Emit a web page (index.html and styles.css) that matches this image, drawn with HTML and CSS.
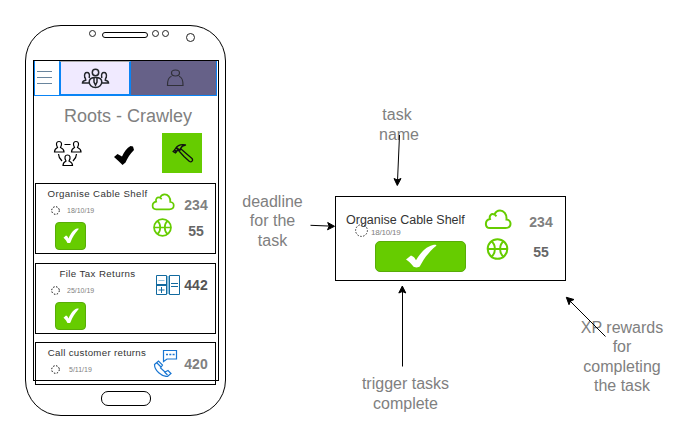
FILE: index.html
```html
<!DOCTYPE html>
<html lang="en">
<head>
<meta charset="utf-8">
<title>Roots - Crawley</title>
<link rel="stylesheet" href="styles.css">
</head>
<body>
<svg class="defs" width="0" height="0">
  <symbol id="cloud" viewBox="0 0 27 21"><path d="M5.500 19H21c6.500 0 6.500-8 1-8.500C22.500 5 19 1.500 15.500 1.500c-3 0-4.500 1.500-5.500 4C6.500 4 4.500 7 5.500 10 0 11 0 19 5.500 19ZM10 5.500l2 1.700" fill="none" stroke="#6c0" stroke-width="2"/></symbol>
  <symbol id="ball" viewBox="0 0 22 22"><path d="M1 11h20M5 3.500c4.500 3 4.500 12 0 15M17 3.500c-4.500 3-4.500 12 0 15" fill="none" stroke="#6c0" stroke-width="2"/><circle cx="11" cy="11" r="9.800" fill="none" stroke="#6c0" stroke-width="2"/></symbol>
  <symbol id="tick" viewBox="0 0 32 26" preserveAspectRatio="none"><path d="M1 16l5-4c3 1 4 3 5 5C15 10 20 3 28 1c3-.5 4 0 3 1C24 8 19 15 15 23c-1 2-6 2-7 0-2-3-4-5-7-7Z" fill="currentColor"/></symbol>
</svg>
<main class="canvas">
  <section class="phone">
    <svg class="speaker" width="199" height="34" viewBox="26 26 199 34" fill="none" stroke="#222">
      <circle cx="92.500" cy="33.500" r="3"/><rect x="102.500" y="32.500" width="45" height="5" rx="2.500" stroke="#000"/>
      <circle cx="155.500" cy="33.500" r="3"/><circle cx="165.500" cy="33.500" r="3"/><circle cx="190.500" cy="37.500" r="4"/>
    </svg>
    <div class="screen">
      <nav class="tabs">
        <div class="tab menu"><svg width="16" height="16" viewBox="0 0 16 16" stroke="#69859d"><path d="M0 1.500h15M0 7.500h15M0 13.500h15"/></svg></div>
        <div class="tab group">
          <svg width="30" height="22" viewBox="80 66 30 22" fill="none" stroke="#23262b" stroke-width="1.500">
            <circle cx="95.500" cy="71.500" r="3.200"/>
            <path d="M84.800 77c-1-4.500.7-5.500 2.200-5.500s3.200 1 2.200 5.500M101.800 77c-1-4.500.7-5.500 2.200-5.500s3.200 1 2.200 5.500M85 76.500c.5 1 .8 2 .7 2.800-2 .5-3.200.8-3.200 2.700h6.500M106 76.500c-.5 1-.8 2-.7 2.800 2 .5 3.200.8 3.200 2.700H102M95.500 76.500c-4 0-6.300 2-6.300 4.500s2.300 5.500 6.300 5.500 6.300-3 6.300-5.500-2.300-4.500-6.300-4.500Z"/>
            <path d="M94 77v4l1.500 3 1.500-3v-4"/>
          </svg>
        </div>
        <div class="tab user">
          <svg width="18" height="18" viewBox="166 69 18 18" fill="none" stroke="#303039" stroke-width="1.200"><ellipse cx="175.500" cy="73" rx="4" ry="3"/><path d="M171.500 76.300c-3 1-4 3-4 9.200h15.500c0-6.200-1-8.200-4-9.200"/></svg>
        </div>
      </nav>
      <h1 class="heading">Roots - Crawley</h1>
      <div class="actions">
        <svg class="action-people" width="30" height="28" viewBox="53 140 30 28" fill="none" stroke="#000" stroke-width="1.200">
          <path d="M57.500 147.500c-2-3.500-1-6 1.500-6s3.500 2.500 1.500 6c2 1 3.500 1.500 3.500 4.500h-9.500c0-3 1-3.500 3-4.500ZM74.500 147.500c-2-3.500-1-6 1.500-6s3.500 2.500 1.500 6c2 1 3.500 1.500 3.500 4.500h-9.500c0-3 1-3.500 3-4.500ZM66 161c-2-3.500-1-6 1.500-6s3.500 2.500 1.500 6c2 1 3.500 1.500 3.500 4.500H63c0-3 1-3.500 3-4.500ZM64.500 144.500h6M58.500 154c0 3 1.500 5 3.500 7M76.500 154c0 3-1.500 5-3.500 7"/>
        </svg>
        <svg class="action-done" width="20" height="20" viewBox="0 0 20 20"><path d="M0 11l3.500-3 4.500 2.500C10 6 13 2 16.500 0L19 .5l1 3.500c-4 4-6.500 8-8.500 12.500L8.500 19C6 16 3 14 0 11Z"/></svg>
        <div class="action-tool">
          <svg width="22" height="20" viewBox="171 143 22 20" fill="none" stroke="#111" stroke-width="1.300" stroke-linejoin="round"><path d="M172.500 151.500l2-3c2-3 5-4.500 10-3.500-2 .5-4 1.500-4.500 3l-1.500 2-2.500.5-1.500 2.500-2.500-1.500Z"/><path d="M178 151l2-2 11 9.500c1.500 2-.5 4-2.500 3L183 156.500Z"/><path d="M173 150l3 2M175 147.500l3 2.500" stroke-width="2"/></svg>
        </div>
      </div>
      <div class="cards">
        <article class="card">
          <div class="info">
            <h2 class="title">Organise Cable Shelf</h2>
            <div class="due"><svg width="9" height="9" viewBox="0 0 9 9"><circle cx="4.500" cy="4.500" r="3.800" fill="none" stroke="#000" stroke-dasharray="1.500 1.500"/></svg><span>18/10/19</span></div>
            <button class="done"><svg width="16" height="16"><use href="#tick"/></svg></button>
          </div>
          <div class="icons"><svg width="24" height="18"><use href="#cloud"/></svg><svg width="19" height="19"><use href="#ball"/></svg></div>
          <div class="points"><b>234</b><b class="dark">55</b></div>
        </article>
        <article class="card">
          <div class="info">
            <h2 class="title">File Tax Returns</h2>
            <div class="due"><svg width="9" height="9" viewBox="0 0 9 9"><circle cx="4.500" cy="4.500" r="3.800" fill="none" stroke="#000" stroke-dasharray="1.500 1.500"/></svg><span>25/10/19</span></div>
            <button class="done"><svg width="16" height="16"><use href="#tick"/></svg></button>
          </div>
          <div class="icons calc">
            <svg width="25" height="20" viewBox="156 275 25 20" fill="none" stroke="#126a9f"><path d="M156.500 275.500h10v19h-10ZM169.500 275.500h10v19h-10Z"/><path d="M168 276v18" stroke="#8fc0dc" stroke-width="2"/><path d="M156 285h11" stroke-width="2"/><path d="M171 283.500h7M171 286.500h7M158.500 290h6M161.500 287v6"/><path d="M158.500 280.500h6" stroke="#8fc0dc"/></svg>
          </div>
          <div class="points"><b class="darker">442</b></div>
        </article>
        <article class="card short">
          <div class="info">
            <h2 class="title t3">Call customer returns</h2>
            <div class="due"><svg width="9" height="9" viewBox="0 0 9 9"><circle cx="4.500" cy="4.500" r="3.800" fill="none" stroke="#000" stroke-dasharray="1.500 1.500"/></svg><span class="d3">5/11/19</span></div>
          </div>
          <div class="icons call">
            <svg width="26" height="28" viewBox="153 349 26 28" fill="none" stroke="#1976d2" stroke-width="1.200"><path d="M163.500 350.500h13v8.500H167l-3.500 2.500Z"/><path d="M166 354.500h9" stroke-width="1.500" stroke-dasharray="2 1.300"/><path d="M154.500 364.500l4-3.500 4 4-2 3 4.500 4 3-1.500 3 3-3.500 3c-6 0-13-6-13-12ZM157 363l4 4M164.500 372l3 3"/></svg>
          </div>
          <div class="points"><b>420</b></div>
        </article>
      </div>
    </div>
    <div class="home"></div>
  </section>

  <article class="detail">
    <div class="detail-info">
      <h2 class="detail-title">Organise Cable Shelf</h2>
      <div class="detail-due"><svg width="13" height="13" viewBox="0 0 13 13"><circle cx="6.500" cy="6.500" r="5.900" fill="none" stroke="#000" stroke-dasharray="1.200 1.800"/></svg><span>18/10/19</span></div>
      <button class="detail-done"><svg width="32" height="25"><use href="#tick"/></svg></button>
    </div>
    <div class="detail-icons"><svg width="28" height="21"><use href="#cloud"/></svg><svg width="23" height="22"><use href="#ball"/></svg></div>
    <div class="detail-points"><b>234</b><b class="dark">55</b></div>
  </article>

  <p class="note note-name">task<br><span class="shift">name</span></p>
  <p class="note note-deadline">deadline<br>for the<br>task</p>
  <p class="note note-trigger">trigger tasks<br>complete</p>
  <p class="note note-xp">XP rewards<br>for<br>completing<br>the task</p>
  <svg class="arrows" width="697" height="442" viewBox="0 0 697 442" stroke="#000">
    <path d="M399.500 135l-2 46M310.500 225.300l20 .8M402.500 366.500V290M605.500 336.500L569 300" fill="none"/>
    <path d="M397.300 185.500l-3.300-7 3.500 1.500 3.500-1.500ZM334.500 226.300l-7 3.500 1.700-3.600-1.500-3.700ZM402.300 286l3.500 7-3.500-1.500-3.500 1.500ZM566.300 297.300l7.700 2.200-3.500 1.700-1.500 3.500Z"/>
  </svg>
</main>
</body>
</html>
```
FILE: styles.css
```css
* { box-sizing: border-box; }
body { margin: 0; background: #fff; font-family: "Liberation Sans", Arial, sans-serif; color: #808080; }
svg { display: block; flex: none; }
.defs { position: absolute; }
h1, h2, p { margin: 0; font-weight: normal; }
button { padding: 0; color: #fff; background: #6c0; border: 1px solid #58ac08; display: flex; align-items: center; justify-content: center; }
.canvas { position: relative; width: 697px; height: 442px; overflow: hidden; }

.phone { position: absolute; left: 25px; top: 25px; width: 201px; height: 391px; border: 1px solid #000; border-radius: 36px; }
.screen { width: 186px; height: 321px; margin-left: 7px; border: 1px solid #000; }
.home { width: 50px; height: 15px; margin: 10px 0 0 75px; border: 1px solid #000; border-radius: 7px; }

.tabs { display: flex; height: 35px; margin-right: 1px; }
.tab { display: flex; align-items: center; justify-content: center; border-bottom: 1px solid #0a84f5; }
.menu { width: 25px; border-left: 1px solid #0a84f5; justify-content: flex-start; padding-left: 2px; }
.group { width: 72px; background: #f0eaff; border: 2px solid #0a84f5; border-top: 1px solid #aaa; }
.user { flex: 1; background: #666188; border-right: 1px solid #0a84f5; padding-left: 3px; }

.heading { height: 37px; padding-top: 10px; font-size: 18px; line-height: 21px; text-align: center; padding-left: 4px; white-space: nowrap; }
.actions { display: flex; height: 50px; padding: 0 16px 0 19px; }
.action-people { margin-top: 7px; }
.action-done { margin: 13px 0 0 31px; }
.action-tool { width: 40px; height: 40px; margin: 0 0 0 28px; background: #6c0; display: flex; align-items: center; justify-content: center; padding: 0 0 1px 1px; }

.cards { display: flex; flex-direction: column; gap: 9px; margin-left: 1px; width: 181px; }
.card { display: grid; grid-template-columns: 113px 29px 37px; height: 71px; border: 1px solid #000; }
.short { height: 43px; margin-top: -1px; }
.info { padding: 3px 0 0 10px; }
.title { font-size: 9.7px; line-height: 14px; color: #333; text-align: center; white-space: nowrap; letter-spacing: .4px; }
.t3 { letter-spacing: .3px; padding-right: 1px; }
.due { display: flex; align-items: center; gap: 7px; height: 17px; margin-left: 5px; font-size: 7px; line-height: 9px; padding-top: 1px; }
.d3 { margin-left: 2px; }
.done { width: 31px; height: 28px; margin: 4px 0 0 9px; border-radius: 4px; }
.icons { padding: 9px 0 0 2px; display: flex; flex-direction: column; gap: 7px; }
.icons svg + svg { margin-left: 2px; }
.calc { padding: 11px 0 0 7px; }
.call { padding: 6px 0 0 4px; }
.points { display: flex; flex-direction: column; align-items: center; gap: 10px; padding: 13px 1px 0 0; font-size: 14px; line-height: 16px; }
.dark { color: #666; }
.darker { color: #555; }

.detail { position: absolute; left: 335px; top: 196px; width: 231px; height: 85px; border: 1px solid #000; display: grid; grid-template-columns: 148px 37px 44px; }
.detail-info { padding: 15px 0 0 10px; }
.detail-title { font-size: 12.5px; line-height: 16px; color: #333; white-space: nowrap; }
.detail-due { display: flex; align-items: center; gap: 3px; height: 13px; margin: -5px 0 0 9px; font-size: 8px; padding-top: 2px; }
.detail-due svg { margin-top: -1px; }
.detail-due span { padding-top: 3px; letter-spacing: -.2px; }
.detail-done { width: 91px; height: 31px; margin: 5px 0 0 29px; border-radius: 5px; }
.detail-done svg { margin-top: -1px; }
.detail-icons { display: flex; flex-direction: column; gap: 8px; padding-top: 12px; }
.detail-icons svg + svg { margin-left: 2px; }
.detail-points { display: flex; flex-direction: column; align-items: center; gap: 14px; padding: 17px 5px 0 1px; font-size: 14px; line-height: 16px; }

.note { position: absolute; font-size: 16px; line-height: 19.3px; text-align: center; white-space: nowrap; }
.note-name { left: 347px; top: 105px; width: 100px; line-height: 20px; }
.shift { padding-left: 4px; }
.note-deadline { left: 222.500px; top: 192px; width: 100px; }
.note-trigger { left: 345.500px; top: 374px; width: 120px; line-height: 20px; }
.note-xp { left: 562px; top: 318px; width: 120px; }
.arrows { position: absolute; left: 0; top: 0; }
```
